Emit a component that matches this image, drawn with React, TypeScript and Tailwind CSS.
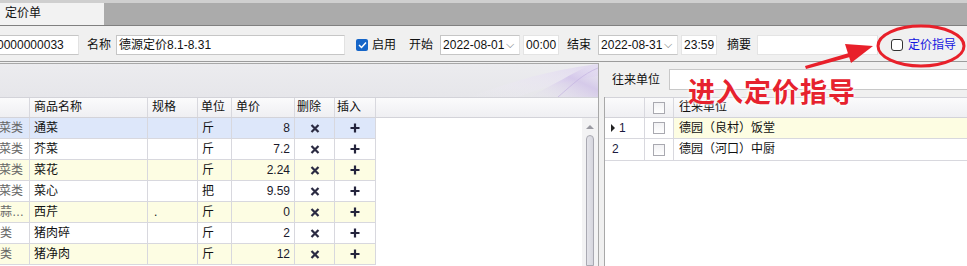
import React from 'react';

type Row = { cat: string; name: string; spec: string; unit: string; price: string; bg: string };

const rows: Row[] = [
  { cat: '蔬菜类', name: '通菜', spec: '', unit: '斤', price: '8', bg: 'bg-[#dde7fa]' },
  { cat: '蔬菜类', name: '芥菜', spec: '', unit: '斤', price: '7.2', bg: 'bg-white' },
  { cat: '蔬菜类', name: '菜花', spec: '', unit: '斤', price: '2.24', bg: 'bg-[#fdfde3]' },
  { cat: '蔬菜类', name: '菜心', spec: '', unit: '把', price: '9.59', bg: 'bg-white' },
  { cat: '葱蒜…', name: '西芹', spec: '.', unit: '斤', price: '0', bg: 'bg-[#fdfde3]' },
  { cat: '肉类', name: '猪肉碎', spec: '', unit: '斤', price: '2', bg: 'bg-white' },
  { cat: '肉类', name: '猪净肉', spec: '', unit: '斤', price: '12', bg: 'bg-[#fdfde3]' },
];

const cell = 'h-full border-r border-[#d8d8de] overflow-hidden whitespace-nowrap';

function Cross() {
  return (
    <svg width="10" height="9" viewBox="0 0 10 9">
      <path d="M1.5 1 L8.5 8 M8.5 1 L1.5 8" stroke="#2b2b42" strokeWidth="2.2" />
    </svg>
  );
}

function Plus() {
  return (
    <svg width="10" height="10" viewBox="0 0 10 10">
      <path d="M5 0.5 V9.5 M0.5 5 H9.5" stroke="#24243c" strokeWidth="2.2" />
    </svg>
  );
}

function GridBox() {
  return (
    <div className="w-[12px] h-[12px] border border-[#a9a9b0] bg-gradient-to-b from-[#f2f2f4] to-[#ffffff]" />
  );
}

function Input({ w, children, chevron }: { w: string; children?: React.ReactNode; chevron?: boolean }) {
  return (
    <div
      className={`${w} h-[20px] bg-white border border-[#c6c6c6] border-r-[#e2e2e2] flex items-center px-[2px] overflow-hidden whitespace-nowrap`}
    >
      <span className="flex-1">{children}</span>
      {chevron && <span className="text-[#777] text-[11px] mr-[3px] -mt-[3px]">⌵</span>}
    </div>
  );
}

export default function App() {
  return (
    <div className="relative w-[967px] h-[266px] overflow-hidden bg-[#f0f0f0] text-[12px] leading-[20px] text-[#111] font-['Liberation_Sans','Noto_Sans_CJK_SC',sans-serif]">
      {/* tab strip */}
      <div className="h-[25px] flex bg-[#cfcfcf] pt-[3px]">
        <div className="w-[104px] bg-[#f2f2f2] pl-[5px] leading-[21px]">定价单</div>
        <div className="flex-1 bg-[#ababab]" />
      </div>

      {/* form row */}
      <div className="h-[37px] border-t border-b border-t-[#808080] border-b-[#9c9c9c] flex items-start pt-[9px]">
        <Input w="w-[80px] border-l-0 -ml-[1px]">
          <span className="-ml-[4px]">0000000033</span>
        </Input>
        <span className="ml-[8px] mr-[5px]">名称</span>
        <Input w="w-[229px]">德源定价8.1-8.31</Input>
        <div className="ml-[11px] mt-[4px] w-[12px] h-[12px] rounded-[2px] bg-[#1565c8] flex items-center justify-center">
          <svg width="9" height="8" viewBox="0 0 9 8">
            <path d="M1 4 L3.5 6.5 L8 1.5" stroke="white" strokeWidth="1.5" fill="none" />
          </svg>
        </div>
        <span className="ml-[4px]">启用</span>
        <span className="ml-[13px]">开始</span>
        <div className="ml-[7px]">
          <Input w="w-[80px] border-[#7a7a7a]" chevron>2022-08-01</Input>
        </div>
        <div className="ml-[3px]">
          <Input w="w-[36px] border-[#e4e4e4]">00:00</Input>
        </div>
        <span className="ml-[8px]">结束</span>
        <div className="ml-[7px]">
          <Input w="w-[80px] border-[#7a7a7a]" chevron>2022-08-31</Input>
        </div>
        <div className="ml-[3px]">
          <Input w="w-[36px] border-[#e4e4e4]">23:59</Input>
        </div>
        <span className="ml-[10px]">摘要</span>
        <div className="ml-[6px]">
          <Input w="w-[121px] border-[#e4e4e4]" />
        </div>
        <div className="ml-[13px] mt-[4px] w-[12px] h-[12px] rounded-[3px] border border-[#333] bg-white" />
        <span className="ml-[5px] text-[#1515e0]">定价指导</span>
      </div>

      {/* body */}
      <div className="mt-[1px] h-[203px] flex">
        {/* left panel */}
        <div className="w-[599px] h-full border-t border-r border-[#a8a8a8] flex flex-col">
          <div className="h-[33px] relative bg-gradient-to-b from-[#ececef] to-[#e6e6ea]">
            <svg className="absolute right-0 top-0" width="140" height="33" viewBox="0 0 140 33">
              <defs>
                <linearGradient id="sw1" x1="0" y1="1" x2="1" y2="0">
                  <stop offset="0" stopColor="#e8e2f2" stopOpacity="0" />
                  <stop offset="0.6" stopColor="#cdbde8" stopOpacity="0.7" />
                  <stop offset="1" stopColor="#e9e4f4" stopOpacity="0.3" />
                </linearGradient>
                <linearGradient id="sw2" x1="0" y1="1" x2="1" y2="0">
                  <stop offset="0" stopColor="#f4f1f9" stopOpacity="0" />
                  <stop offset="1" stopColor="#ddd3ef" stopOpacity="0.8" />
                </linearGradient>
              </defs>
              <path d="M10 33 C50 20 80 8 140 0 L140 12 C100 18 80 26 60 33 Z" fill="url(#sw2)" />
              <path d="M70 33 C95 22 115 8 135 0 L140 0 L140 33 Z" fill="url(#sw1)" />
              <path d="M100 33 C115 20 125 10 140 4" stroke="#bfaedf" strokeOpacity="0.6" fill="none" />
            </svg>
          </div>

          {/* header */}
          <div className="h-[21px] flex border-y border-[#d3d3d9] bg-gradient-to-b from-[#fbfbfc] to-[#efeff2] leading-[19px]">
            <div className={`${cell} w-[30px]`} />
            <div className={`${cell} w-[118px] pl-[4px]`}>商品名称</div>
            <div className={`${cell} w-[50px] pl-[4px]`}>规格</div>
            <div className={`${cell} w-[34px] pl-[3px]`}>单位</div>
            <div className={`${cell} w-[63px] pl-[4px]`}>单价</div>
            <div className={`${cell} w-[40px] pl-[2px]`}>删除</div>
            <div className={`${cell} w-[41px] pl-[2px]`}>插入</div>
            <div className="flex-1" />
          </div>

          <div className="flex-1 flex bg-white overflow-hidden">
            <div className="w-[376px]">
              {rows.map((r) => (
                <div key={r.name} className={`h-[21px] flex border-b border-[#d8d8de] ${r.bg}`}>
                  <div className={`${cell} w-[30px] text-[#666]`}>
                    <span className={r.cat.length === 3 && !r.cat.endsWith('…') ? '-ml-[13px]' : '-ml-[12px]'}>{r.cat}</span>
                  </div>
                  <div className={`${cell} w-[118px] pl-[4px]`}>{r.name}</div>
                  <div className={`${cell} w-[50px] pl-[6px]`}>{r.spec}</div>
                  <div className={`${cell} w-[34px] pl-[4px]`}>{r.unit}</div>
                  <div className={`${cell} w-[63px] pr-[4px] text-right text-[#1a1a2a]`}>{r.price}</div>
                  <div className={`${cell} w-[40px] flex items-center justify-center`}>
                    <Cross />
                  </div>
                  <div className={`${cell} w-[41px] flex items-center justify-center`}>
                    <Plus />
                  </div>
                </div>
              ))}
            </div>
            <div className="flex-1" />
            {/* scrollbar */}
            <div className="w-[16px] bg-[#f3f3f4] flex flex-col items-center pt-[7px]">
              <div className="w-0 h-0 border-l-[4px] border-r-[4px] border-b-[4px] border-l-transparent border-r-transparent border-b-[#9a9aa2]" />
              <div className="mt-[6px] w-[8px] flex-1 rounded-t-[4px] border border-[#a9a9b2] bg-gradient-to-r from-[#e4e4ea] to-[#d6d6de]" />
            </div>
          </div>
        </div>

        {/* right panel */}
        <div className="flex-1 ml-[5px] flex flex-col">
          <div className="h-[34px] flex items-start pt-[6px]">
            <span className="ml-[8px] mt-[1px]">往来单位</span>
            <div className="ml-[9px] flex-1 h-[21px] bg-white border border-[#c8c8c8] border-r-0" />
          </div>
          <div className="flex-1 border-l border-[#a8a8a8] bg-white">
            <div className="h-[21px] flex border-y border-[#d3d3d9] bg-gradient-to-b from-[#fbfbfc] to-[#efeff2] leading-[19px]">
              <div className={`${cell} w-[40px]`} />
              <div className={`${cell} w-[29px] flex items-center justify-center`}>
                <GridBox />
              </div>
              <div className="flex-1 pl-[5px]">往来单位</div>
            </div>
            <div className="h-[21px] flex border-b border-[#d8d8de]">
              <div className={`${cell} w-[40px] flex items-center pl-[6px]`}>
                <span className="w-0 h-0 border-t-[4px] border-b-[4px] border-l-[4px] border-t-transparent border-b-transparent border-l-[#222]" />
                <span className="ml-[4px] text-[#1a1a40]">1</span>
              </div>
              <div className={`${cell} w-[29px] flex items-center justify-center`}>
                <GridBox />
              </div>
              <div className="flex-1 pl-[5px] bg-[#fdfde2]">德园（良村）饭堂</div>
            </div>
            <div className="h-[22px] flex border-b border-[#d8d8de]">
              <div className={`${cell} w-[40px] pl-[7px] text-[#1a1a40]`}>2</div>
              <div className={`${cell} w-[29px] flex items-center justify-center`}>
                <GridBox />
              </div>
              <div className="flex-1 pl-[5px]">德园（河口）中厨</div>
            </div>
          </div>
        </div>
      </div>

      {/* annotation overlay */}
      <svg className="absolute left-0 top-0 pointer-events-none" width="967" height="266" viewBox="0 0 967 266">
        <ellipse cx="921" cy="46" rx="43" ry="20" fill="none" stroke="#e8202a" strokeWidth="3" />
        <path d="M805 66 L806 69 L850 57 L849 53 Z" fill="#e8202a" />
        <path d="M873 46 L845 44 L851 63 Z" fill="#e8202a" />
      </svg>
      <div className="absolute left-[688px] top-[77px] text-[27px] leading-none font-bold tracking-[1px] text-[#e6222e] font-['Noto_Sans_CJK_SC',sans-serif] [text-shadow:0_0_2px_#fff,0_0_3px_#fff,0_0_4px_#fff]">
        进入定价指导
      </div>
    </div>
  );
}
